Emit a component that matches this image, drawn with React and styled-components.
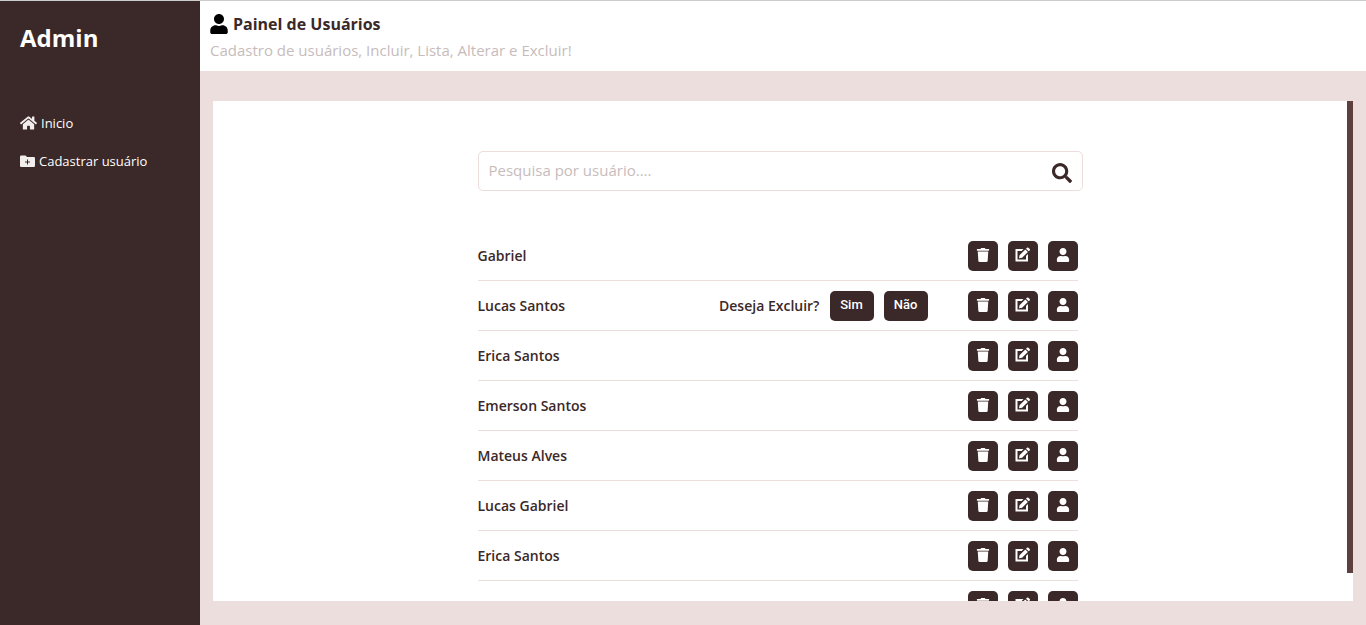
import React, { useRef, useState, useEffect } from "react";
import styled, { createGlobalStyle } from "styled-components";
import { FaHome, FaUser, FaTrash, FaSearch } from "react-icons/fa";

const dark = "#3b2828";
const rose = "#ecdedd";
const muted = "#c7bcbc";

const GlobalStyle = createGlobalStyle`
  * { box-sizing: border-box; margin: 0; padding: 0; }
  body { font-family: "Open Sans", sans-serif; color: ${dark}; background: ${rose}; }
`;

const Layout = styled.div`
  display: flex;
  height: 100vh;
  border-top: 1px solid #cccccc;
`;

const Sidebar = styled.aside`
  flex: 0 0 200px;
  background: ${dark};
  color: #ffffff;
  padding: 20px;
`;

const Brand = styled.h1`
  font-size: 24px;
  line-height: 34px;
  font-weight: 700;
`;

const Menu = styled.nav`
  display: flex;
  flex-direction: column;
  gap: 18px;
  margin-top: 58px;
`;

const MenuLink = styled.a`
  display: flex;
  align-items: center;
  gap: 4px;
  color: #ffffff;
  font-size: 13px;
  line-height: 20px;
  text-decoration: none;

  svg { color: #f3eeee; }
`;

const HomeIcon = styled(FaHome)`
  width: 17px;
  height: 16px;
`;

const Main = styled.main`
  flex: 1;
  min-width: 0;
  display: flex;
  flex-direction: column;
`;

const Header = styled.header`
  background: #ffffff;
  padding: 10px 10px 8px;
`;

const Title = styled.h2`
  display: flex;
  align-items: center;
  gap: 5px;
  font-size: 16px;
  line-height: 26px;
  font-weight: 700;
`;

const TitleIcon = styled(FaUser)`
  width: 18px;
  height: 20px;
  color: #000000;
`;

const Subtitle = styled.p`
  color: ${muted};
  font-size: 15px;
  line-height: 26px;
`;

const Panel = styled.section`
  flex: 1;
  min-height: 0;
  width: calc(100% - 26px);
  margin: 30px auto 24px;
  display: flex;
  background: #ffffff;
`;

const ScrollArea = styled.div`
  flex: 1;
  min-width: 0;
  overflow-y: auto;
  scrollbar-width: none;
`;

const ScrollTrack = styled.div`
  flex: 0 0 6px;
  overflow: hidden;
`;

const ScrollThumb = styled.div`
  background: #5c4040;
`;

const Content = styled.div`
  max-width: 605px;
  margin: 0 auto;
  padding-top: 50px;
`;

const SearchForm = styled.form`
  display: flex;
  height: 40px;
  padding: 0 10px;
  border: 1px solid ${rose};
  border-radius: 5px;
`;

const SearchInput = styled.input`
  flex: 1;
  min-width: 0;
  padding-bottom: 2px;
  border: 0;
  outline: 0;
  background: none;
  color: ${dark};
  font: 15px "Open Sans", sans-serif;

  &::placeholder { color: ${muted}; }
`;

const SearchButton = styled.button`
  display: flex;
  align-items: center;
  padding-top: 4px;
  border: 0;
  background: none;
  color: ${dark};
  cursor: pointer;
`;

const UserList = styled.ul`
  list-style: none;
  margin: 40px 5px 0 0;
`;

const UserRow = styled.li`
  display: flex;
  align-items: center;
  height: 50px;
  border-bottom: 1px solid ${rose};
  font-size: 14px;
  font-weight: 600;
`;

const UserName = styled.span`
  flex: 1;
`;

const Group = styled.div`
  display: flex;
  align-items: center;
  gap: 10px;
`;

const Confirm = styled(Group)`
  margin-right: 40px;
`;

const Button = styled.button`
  display: flex;
  align-items: center;
  justify-content: center;
  width: ${(p) => (p.$wide ? 44 : 30)}px;
  height: 30px;
  padding-bottom: 2px;
  border: 0;
  border-radius: 5px;
  background: ${dark};
  color: #ffffff;
  font: 500 13px Roboto, sans-serif;
  cursor: pointer;
`;

function EditIcon() {
  return (
    <svg width="16" height="15" viewBox="0 0 16 15" fill="currentColor" aria-hidden="true">
      <path d="M0.5 2h8L6.7 4H2.5v8.5H11V9l2-2v7.5H0.5z" />
      <path d="M4 11.2l.5-3L10.3 2.4l2.6 2.6-5.8 5.8zM11 1.7l1-1q.7-.6 1.4 0l1.3 1.3q.6.7 0 1.4l-1 .9z" />
    </svg>
  );
}

function FolderPlusIcon() {
  return (
    <svg width="15" height="13" viewBox="0 0 15 13" fill="currentColor" aria-hidden="true">
      <path
        fillRule="evenodd"
        d="M1.2 0.5H5.5L7 2h6.8Q15 2 15 3.2v7.6Q15 12 13.800 12H1.200Q0 12 0 10.800V1.700Q0 .5 1.200 .5zM7 4.500v2H5v1h2v2h1v-2h2v-1H8v-2z"
      />
    </svg>
  );
}

const users = [
  { name: "Gabriel" },
  { name: "Lucas Santos", confirming: true },
  { name: "Erica Santos" },
  { name: "Emerson Santos" },
  { name: "Mateus Alves" },
  { name: "Lucas Gabriel" },
  { name: "Erica Santos" },
  { name: "Lucas Santos" },
];

function User({ name, confirming }) {
  return (
    <UserRow>
      <UserName>{name}</UserName>
      {confirming && (
        <Confirm>
          <span>Deseja Excluir?</span>
          <Button type="button" $wide>Sim</Button>
          <Button type="button" $wide>Não</Button>
        </Confirm>
      )}
      <Group>
        <Button type="button" aria-label="Excluir"><FaTrash size={14} /></Button>
        <Button type="button" aria-label="Alterar"><EditIcon /></Button>
        <Button type="button" aria-label="Ver"><FaUser size={14} /></Button>
      </Group>
    </UserRow>
  );
}

function ScrollPanel({ children }) {
  const area = useRef(null);
  const [thumb, setThumb] = useState({ size: 0, top: 0 });

  const measure = () => {
    const { clientHeight, scrollHeight, scrollTop } = area.current;
    const ratio = clientHeight / scrollHeight;
    setThumb({ size: ratio < 1 ? clientHeight * ratio : 0, top: scrollTop * ratio });
  };

  useEffect(() => {
    measure();
    window.addEventListener("resize", measure);
    return () => window.removeEventListener("resize", measure);
  }, []);

  return (
    <Panel>
      <ScrollArea ref={area} onScroll={measure}>{children}</ScrollArea>
      <ScrollTrack aria-hidden="true">
        <ScrollThumb style={{ height: thumb.size, transform: `translateY(${thumb.top}px)` }} />
      </ScrollTrack>
    </Panel>
  );
}

export default function App() {
  return (
    <>
      <GlobalStyle />
      <Layout>
        <Sidebar>
          <Brand>Admin</Brand>
          <Menu>
            <MenuLink href="#inicio"><HomeIcon />Inicio</MenuLink>
            <MenuLink href="#cadastrar"><FolderPlusIcon />Cadastrar usuário</MenuLink>
          </Menu>
        </Sidebar>
        <Main>
          <Header>
            <Title><TitleIcon />Painel de Usuários</Title>
            <Subtitle>Cadastro de usuários, Incluir, Lista, Alterar e Excluir!</Subtitle>
          </Header>
          <ScrollPanel>
            <Content>
              <SearchForm role="search">
                <SearchInput type="text" aria-label="Pesquisa por usuário" placeholder="Pesquisa por usuário...." />
                <SearchButton type="button" aria-label="Pesquisar"><FaSearch size={20} /></SearchButton>
              </SearchForm>
              <UserList>
                {users.map((user, i) => <User key={i} {...user} />)}
              </UserList>
            </Content>
          </ScrollPanel>
        </Main>
      </Layout>
    </>
  );
}
